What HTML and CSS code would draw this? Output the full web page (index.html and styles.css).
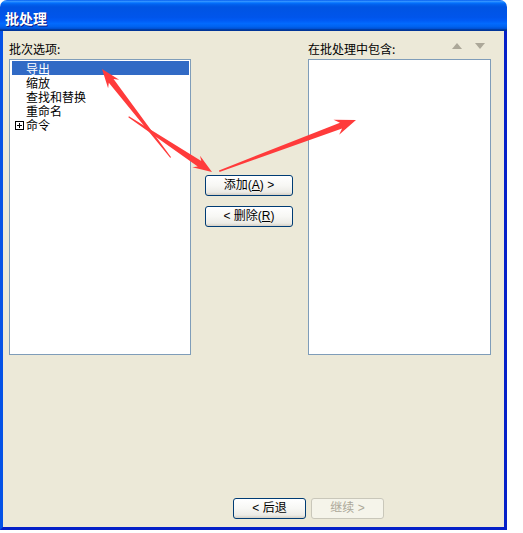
FILE: index.html
```html
<!DOCTYPE html>
<html>
<head>
<meta charset="utf-8">
<link rel="stylesheet" href="styles.css">
</head>
<body>
<div class="window">
  <div class="titlebar"><span class="title">批处理</span></div>
  <div class="frame">
    <div class="columns">
      <div class="col left">
        <div class="label">批次选项:</div>
        <div class="list">
          <div class="item selected">导出</div>
          <div class="item">缩放</div>
          <div class="item">查找和替换</div>
          <div class="item">重命名</div>
          <div class="item tree"><svg class="expander" width="9" height="9" viewBox="0 0 9 9"><rect x="0.5" y="0.5" width="8" height="8" fill="none" stroke="#000" stroke-width="1"/><path d="M2 4.5H7M4.5 2V7" stroke="#000" stroke-width="1"/></svg>命令</div>
        </div>
      </div>
      <div class="mid">
        <button class="btn">添加(<u>A</u>) &gt;</button>
        <button class="btn">&lt; 删除(<u>R</u>)</button>
      </div>
      <div class="col right">
        <div class="label labelrow">
          <span>在批处理中包含:</span>
          <span class="updown">
            <svg width="10" height="6" viewBox="0 0 10 6"><polygon points="5,0 10,6 0,6" fill="#ACA899"/></svg>
            <svg width="10" height="6" viewBox="0 0 10 6"><polygon points="0,0 10,0 5,6" fill="#ACA899"/></svg>
          </span>
        </div>
        <div class="list"></div>
      </div>
    </div>
    <div class="footer">
      <button class="btn">&lt; 后退</button>
      <button class="btn disabled">继续 &gt;</button>
    </div>
  </div>
  <svg class="annot" width="523" height="533" viewBox="0 0 523 533">
    <g fill="#FF3B3B">
      <g transform="translate(102 69) rotate(-127.8)">
        <polygon points="0,0 -19,-7 -15,-3 -112,-0.6 -112,0.6 -15,3 -19,7"/>
      </g>
      <g transform="translate(212 172) rotate(33.5)">
        <polygon points="0,0 -19,-7 -15,-3.2 -100,-0.6 -100,0.6 -15,3.2 -19,7"/>
      </g>
      <g transform="translate(356 120) rotate(-20.5)">
        <polygon points="0,0 -21,-8 -16,-3 -146,-0.8 -146,0.8 -16,3 -21,8"/>
      </g>
    </g>
  </svg>
</div>
</body>
</html>
```

FILE: styles.css
```css
html, body {
  margin: 0;
  padding: 0;
  background: #ffffff;
}
body {
  font-family: "Liberation Sans", "Noto Sans CJK SC", sans-serif;
  font-size: 12px;
  color: #000;
}
.window {
  position: relative;
  width: 507px;
  height: 530px;
  display: flex;
  flex-direction: column;
}
.titlebar {
  height: 31px;
  box-sizing: border-box;
  padding: 6px 0 0 5px;
  border-radius: 7px 7px 0 0;
  background: linear-gradient(to bottom,
    #0058EE 0%, #3593FF 4%, #288EFF 6%, #127DFF 8%, #036FFC 10%,
    #0262EE 14%, #0057E5 20%, #0054E3 24%, #0055EB 56%, #005BF5 66%,
    #026AFE 76%, #0062EF 86%, #0052D6 92%, #0040AB 94%, #003092 100%);
}
.title {
  color: #fff;
  font-family: "Noto Sans CJK SC", sans-serif;
  font-weight: bold;
  font-size: 14px;
  line-height: 25px;
  text-shadow: 1px 1px 0 #0A1883;
}
.frame {
  flex: 1;
  display: flex;
  flex-direction: column;
  background: #ECE9D8;
  border-left: 3px solid #0552E6;
  border-right: 3px solid #0520C8;
  border-bottom: 3px solid #0520C8;
  padding: 10px 0 8px 6px;
}
.columns {
  display: flex;
}
.col {
  display: flex;
  flex-direction: column;
}
.col.left { width: 182px; }
.col.right { width: 183px; }
.label {
  height: 15px;
  line-height: 15px;
  margin-bottom: 3px;
  font-family: "Noto Sans CJK SC", sans-serif;
  white-space: nowrap;
}
.labelrow {
  display: flex;
  justify-content: space-between;
}
.updown {
  display: flex;
  gap: 13px;
  margin-right: 6px;
  padding-top: 2px;
}
.list {
  height: 296px;
  box-sizing: border-box;
  background: #fff;
  border: 1px solid #7F9DB9;
  padding: 1px 1px 1px 2px;
}
.item {
  height: 14px;
  line-height: 16px;
  padding-left: 14px;
  font-family: "Noto Sans CJK SC", sans-serif;
  white-space: nowrap;
}
.item.selected {
  background: #316AC5;
  color: #fff;
}
.item.tree {
  display: flex;
  align-items: center;
  padding-left: 3px;
  margin-top: 1px;
}
.expander {
  margin-right: 2px;
  flex: none;
}
.mid {
  width: 88px;
  margin: 0 15px 0 14px;
  padding-top: 134px;
  display: flex;
  flex-direction: column;
  gap: 10px;
}
.btn {
  height: 21px;
  box-sizing: border-box;
  border: 1px solid #003C74;
  border-radius: 3px;
  background: linear-gradient(to bottom, #FFFFFF 0%, #F7F7F4 50%, #ECEBE6 85%, #D6D0C5 100%);
  font-family: "Liberation Sans", "Noto Sans CJK SC", sans-serif;
  font-size: 12px;
  line-height: 17px;
  color: #000;
  padding: 0;
  margin: 0;
}
.btn.disabled {
  border-color: #C9C7BA;
  background: #F5F4EA;
  color: #ACA899;
}
.footer {
  margin-top: auto;
  display: flex;
  gap: 5px;
  padding-left: 224px;
}
.footer .btn {
  width: 73px;
}
.annot {
  position: absolute;
  left: 0;
  top: 0;
  pointer-events: none;
}
```
